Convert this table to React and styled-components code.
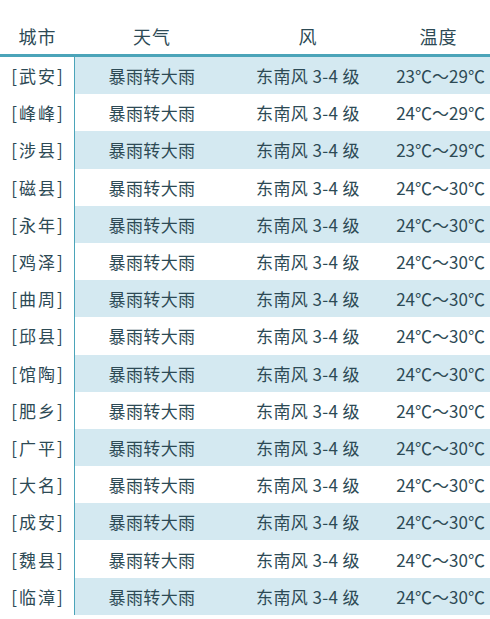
import React from "react";
import styled, { createGlobalStyle } from "styled-components";

const cities = [
    { name: "武安", low: 23, high: 29 },
    { name: "峰峰", low: 24, high: 29 },
    { name: "涉县", low: 23, high: 29 },
    { name: "磁县", low: 24, high: 30 },
    { name: "永年", low: 24, high: 30 },
    { name: "鸡泽", low: 24, high: 30 },
    { name: "曲周", low: 24, high: 30 },
    { name: "邱县", low: 24, high: 30 },
    { name: "馆陶", low: 24, high: 30 },
    { name: "肥乡", low: 24, high: 30 },
    { name: "广平", low: 24, high: 30 },
    { name: "大名", low: 24, high: 30 },
    { name: "成安", low: 24, high: 30 },
    { name: "魏县", low: 24, high: 30 },
    { name: "临漳", low: 24, high: 30 },
];

const GlobalStyle = createGlobalStyle`
    body {
        margin: 0;
        background: #fff;
        font-family: "Noto Sans CJK SC", "Noto Sans", sans-serif;
        color: #2d4a55;
    }
`;

export default function App() {
    return (
        <>
            <GlobalStyle />
            <Table>
                <HeadRow>
                    <HeadCell>城市</HeadCell>
                    <HeadCell>天气</HeadCell>
                    <HeadCell>风</HeadCell>
                    <HeadCell>温度</HeadCell>
                </HeadRow>
                {cities.map((c, i) => (
                    <Row key={c.name} $striped={i % 2 === 0}>
                        <CityCell>[{c.name}]</CityCell>
                        <Cell>暴雨转大雨</Cell>
                        <Cell>东南风 3-4 级</Cell>
                        <TempCell>{c.low}℃～{c.high}℃</TempCell>
                    </Row>
                ))}
            </Table>
        </>
    );
}

const Table = styled.div`
    width: 490px;
    padding-top: 17px;
`;

const HeadRow = styled.div`
    display: grid;
    grid-template-columns: 75px 154px 158px 103px;
    height: 37px;
    border-bottom: 3px solid #4ba4b9;
`;

const HeadCell = styled.div`
    display: flex;
    align-items: center;
    justify-content: center;
    font-size: 18px;
    letter-spacing: 1px;
`;

const Row = styled.div`
    display: grid;
    grid-template-columns: 75px 154px 158px 103px;
    height: 37.2px;
    background: ${(p) => (p.$striped ? "linear-gradient(to right, #fff 75px, #d4e9f1 75px)" : "#fff")};
`;

const Cell = styled.div`
    display: flex;
    align-items: center;
    justify-content: center;
    font-size: 17px;
    letter-spacing: 0.4px;
    white-space: nowrap;
`;

const CityCell = styled(Cell)`
    border-right: 1px solid #4ba4b9;
    letter-spacing: 2px;
    padding-left: 2px;
`;

const TempCell = styled(Cell)`
    letter-spacing: 0;
    padding-left: 4px;
`;
